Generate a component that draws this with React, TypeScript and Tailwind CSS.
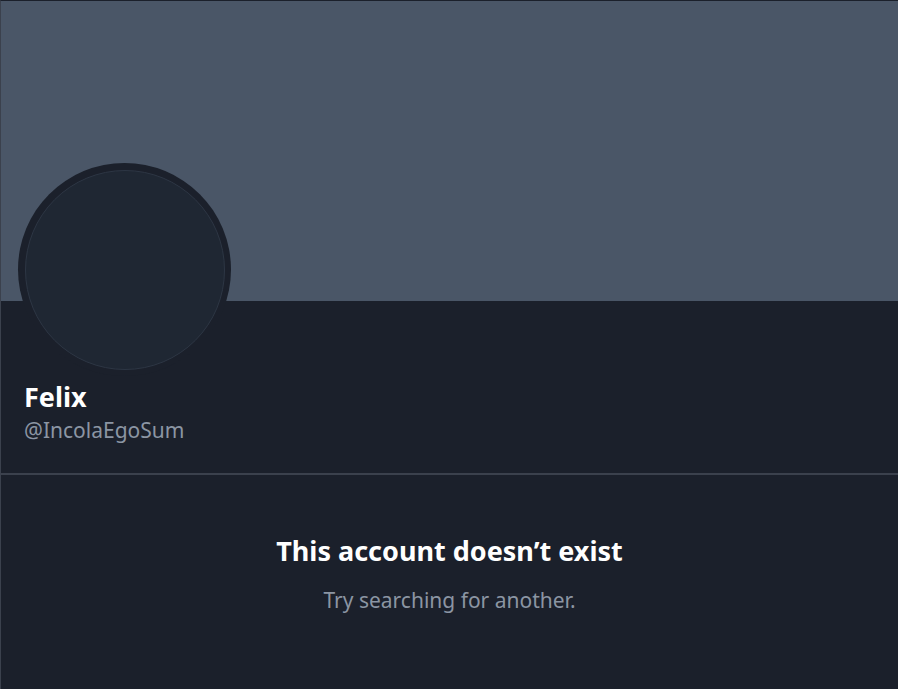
import React from "react";

export default function App() {
  return (
    <div
      className="w-[898px] h-[689px] overflow-hidden bg-[#1b202b] border-l border-l-[#3b414d] border-t border-t-[#1b202b] flex flex-col"
      style={{ fontFamily: '"Noto Sans", "Open Sans", sans-serif' }}
    >
      <div className="relative h-[300px] shrink-0 bg-[#4a5667]">
        <div className="absolute left-[17px] top-[162px] w-[213px] h-[213px] rounded-full bg-[#1b202b] flex items-center justify-center">
          <div className="w-[200px] h-[200px] rounded-full bg-[#1f2733] border border-[#2d3644]" />
        </div>
      </div>
      <div className="pl-[23px] pt-[80px] h-[174px] shrink-0 border-b-2 border-b-[#3b414d]">
        <div className="text-[27px] leading-[32px] font-bold text-white">Felix</div>
        <div className="text-[21px] leading-[26px] text-[#8b95a3] mt-[4px]">@IncolaEgoSum</div>
      </div>
      <div className="flex flex-col items-center pt-[58px]">
        <div className="text-[27px] leading-[36px] font-bold text-white">This account doesn’t exist</div>
        <div className="text-[21px] leading-[28px] text-[#8b95a3] mt-[17px]">Try searching for another.</div>
      </div>
    </div>
  );
}
